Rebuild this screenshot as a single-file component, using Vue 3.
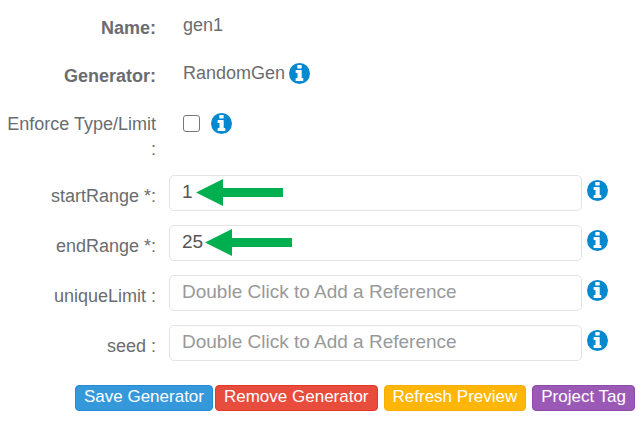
<script setup>
import { ref, h } from 'vue'

const enforce = ref(false)
const hint = 'Double Click to Add a Reference'
const fields = ref([
  { id: 'startRange', label: 'startRange *:', value: '1', arrow: 27 },
  { id: 'endRange', label: 'endRange *:', value: '25', arrow: 36 },
  { id: 'uniqueLimit', label: 'uniqueLimit :', value: '', arrow: null },
  { id: 'seed', label: 'seed :', value: '', arrow: null },
])

const InfoIcon = () =>
  h('svg', { width: 21, height: 21, viewBox: '0 0 21 21', 'aria-hidden': 'true' }, [
    h('circle', { cx: 10.5, cy: 10.5, r: 10.5, fill: '#0488d0' }),
    h('path', {
      fill: '#fff',
      d: 'M8.700 2h3.600q.4 0 .4.4v2.700q0 .4-.4.4H8.700q-.4 0-.4-.4V2.400q0-.4.4-.4zM7 7h5.300q.4 0 .4.4v7.600h1.200q.4 0 .4.4v2.300q0 .4-.4.4H7q-.4 0-.4-.4v-2.300q0-.4.4-.4h1.500V9.900H7q-.4 0-.4-.4V7.400q0-.4.4-.4z',
    }),
  ])
</script>

<template>
  <form class="panel" @submit.prevent>
    <div class="row static">
      <span class="label strong">Name:</span>
      <span class="value">gen1</span>
    </div>
    <div class="row static">
      <span class="label strong">Generator:</span>
      <span class="value">RandomGen <InfoIcon /></span>
    </div>
    <div class="row">
      <label class="label" for="enforce">Enforce Type/Limit :</label>
      <span class="value checks">
        <input id="enforce" v-model="enforce" class="check" type="checkbox" />
        <InfoIcon />
      </span>
    </div>

    <div class="fields">
      <div v-for="f in fields" :key="f.id" class="row field">
        <label class="label" :for="f.id">{{ f.label }}</label>
        <div class="control">
          <input :id="f.id" v-model="f.value" class="text" type="text" :placeholder="hint" />
          <svg
            v-if="f.arrow !== null"
            class="arrow"
            :style="{ left: f.arrow + 'px' }"
            width="87"
            height="27"
            viewBox="0 0 87 27"
            aria-hidden="true"
          >
            <path d="M0 13.500 27 0V9H87V18H27V27Z" fill="#00b050" />
          </svg>
        </div>
        <span class="info"><InfoIcon /></span>
      </div>
    </div>

    <div class="actions">
      <div class="pair">
        <button type="button" class="btn save">Save Generator</button>
        <button type="button" class="btn remove">Remove Generator</button>
      </div>
      <button type="button" class="btn refresh">Refresh Preview</button>
      <button type="button" class="btn tag">Project Tag</button>
    </div>
  </form>
</template>

<style>
body {
  margin: 0;
  background: #fff;
}
</style>

<style scoped>
.panel {
  box-sizing: border-box;
  padding: 13px 9px 12px 0;
  font-family: 'Liberation Sans', Arial, sans-serif;
  font-size: 18px;
  line-height: 25px;
  color: #6b6c6f;
}

.row {
  display: grid;
  grid-template-columns: 156px minmax(0, 1fr) 21px;
  column-gap: 13px;
  align-items: start;
}

.static {
  margin-bottom: 20px;
}

.label {
  padding-top: 3px;
  text-align: right;
}

.strong {
  font-weight: bold;
}

.value {
  display: flex;
  align-items: center;
  gap: 4px;
  padding-left: 14px;
}

.checks {
  gap: 11px;
  padding-top: 4px;
}

.check {
  appearance: none;
  box-sizing: border-box;
  width: 17px;
  height: 17px;
  margin: 0;
  border: 1px solid #767676;
  border-radius: 3px;
  background: #fff;
}

.check:checked {
  background: #0488d0;
}

.fields {
  display: grid;
  row-gap: 14px;
  margin-top: 13px;
  padding-right: 27px;
}

.field {
  grid-template-columns: 156px minmax(0, 1fr) auto;
}

.field .label {
  padding-top: 9px;
}

.control {
  position: relative;
}

.text {
  display: block;
  box-sizing: border-box;
  width: 100%;
  height: 36px;
  padding: 0 12px 2px;
  border: 1px solid #e3e3e3;
  border-radius: 5px;
  background: #fff;
  font: inherit;
  font-size: 19px;
  color: #555;
}

.text::placeholder {
  color: #999;
  opacity: 1;
}

.arrow {
  position: absolute;
  top: 4px;
}

.info {
  display: flex;
  margin-left: -8px;
  padding-top: 5px;
}

.actions {
  display: flex;
  justify-content: flex-end;
  gap: 6px;
  margin-top: 24px;
}

.pair {
  display: flex;
  gap: 2px;
}

.btn {
  height: 26px;
  padding: 0 8px 2px;
  border: 1px solid;
  border-radius: 4px;
  font: inherit;
  font-size: 17px;
  line-height: 22px;
  white-space: nowrap;
  color: #fff;
}

.save {
  background: #3498db;
  border-color: #258cd1;
}

.remove {
  background: #e74c3c;
  border-color: #e43725;
}

.refresh {
  background: #ffb608;
  border-color: #f8ae00;
}

.tag {
  background: #9b59b6;
  border-color: #8f4bab;
}
</style>
